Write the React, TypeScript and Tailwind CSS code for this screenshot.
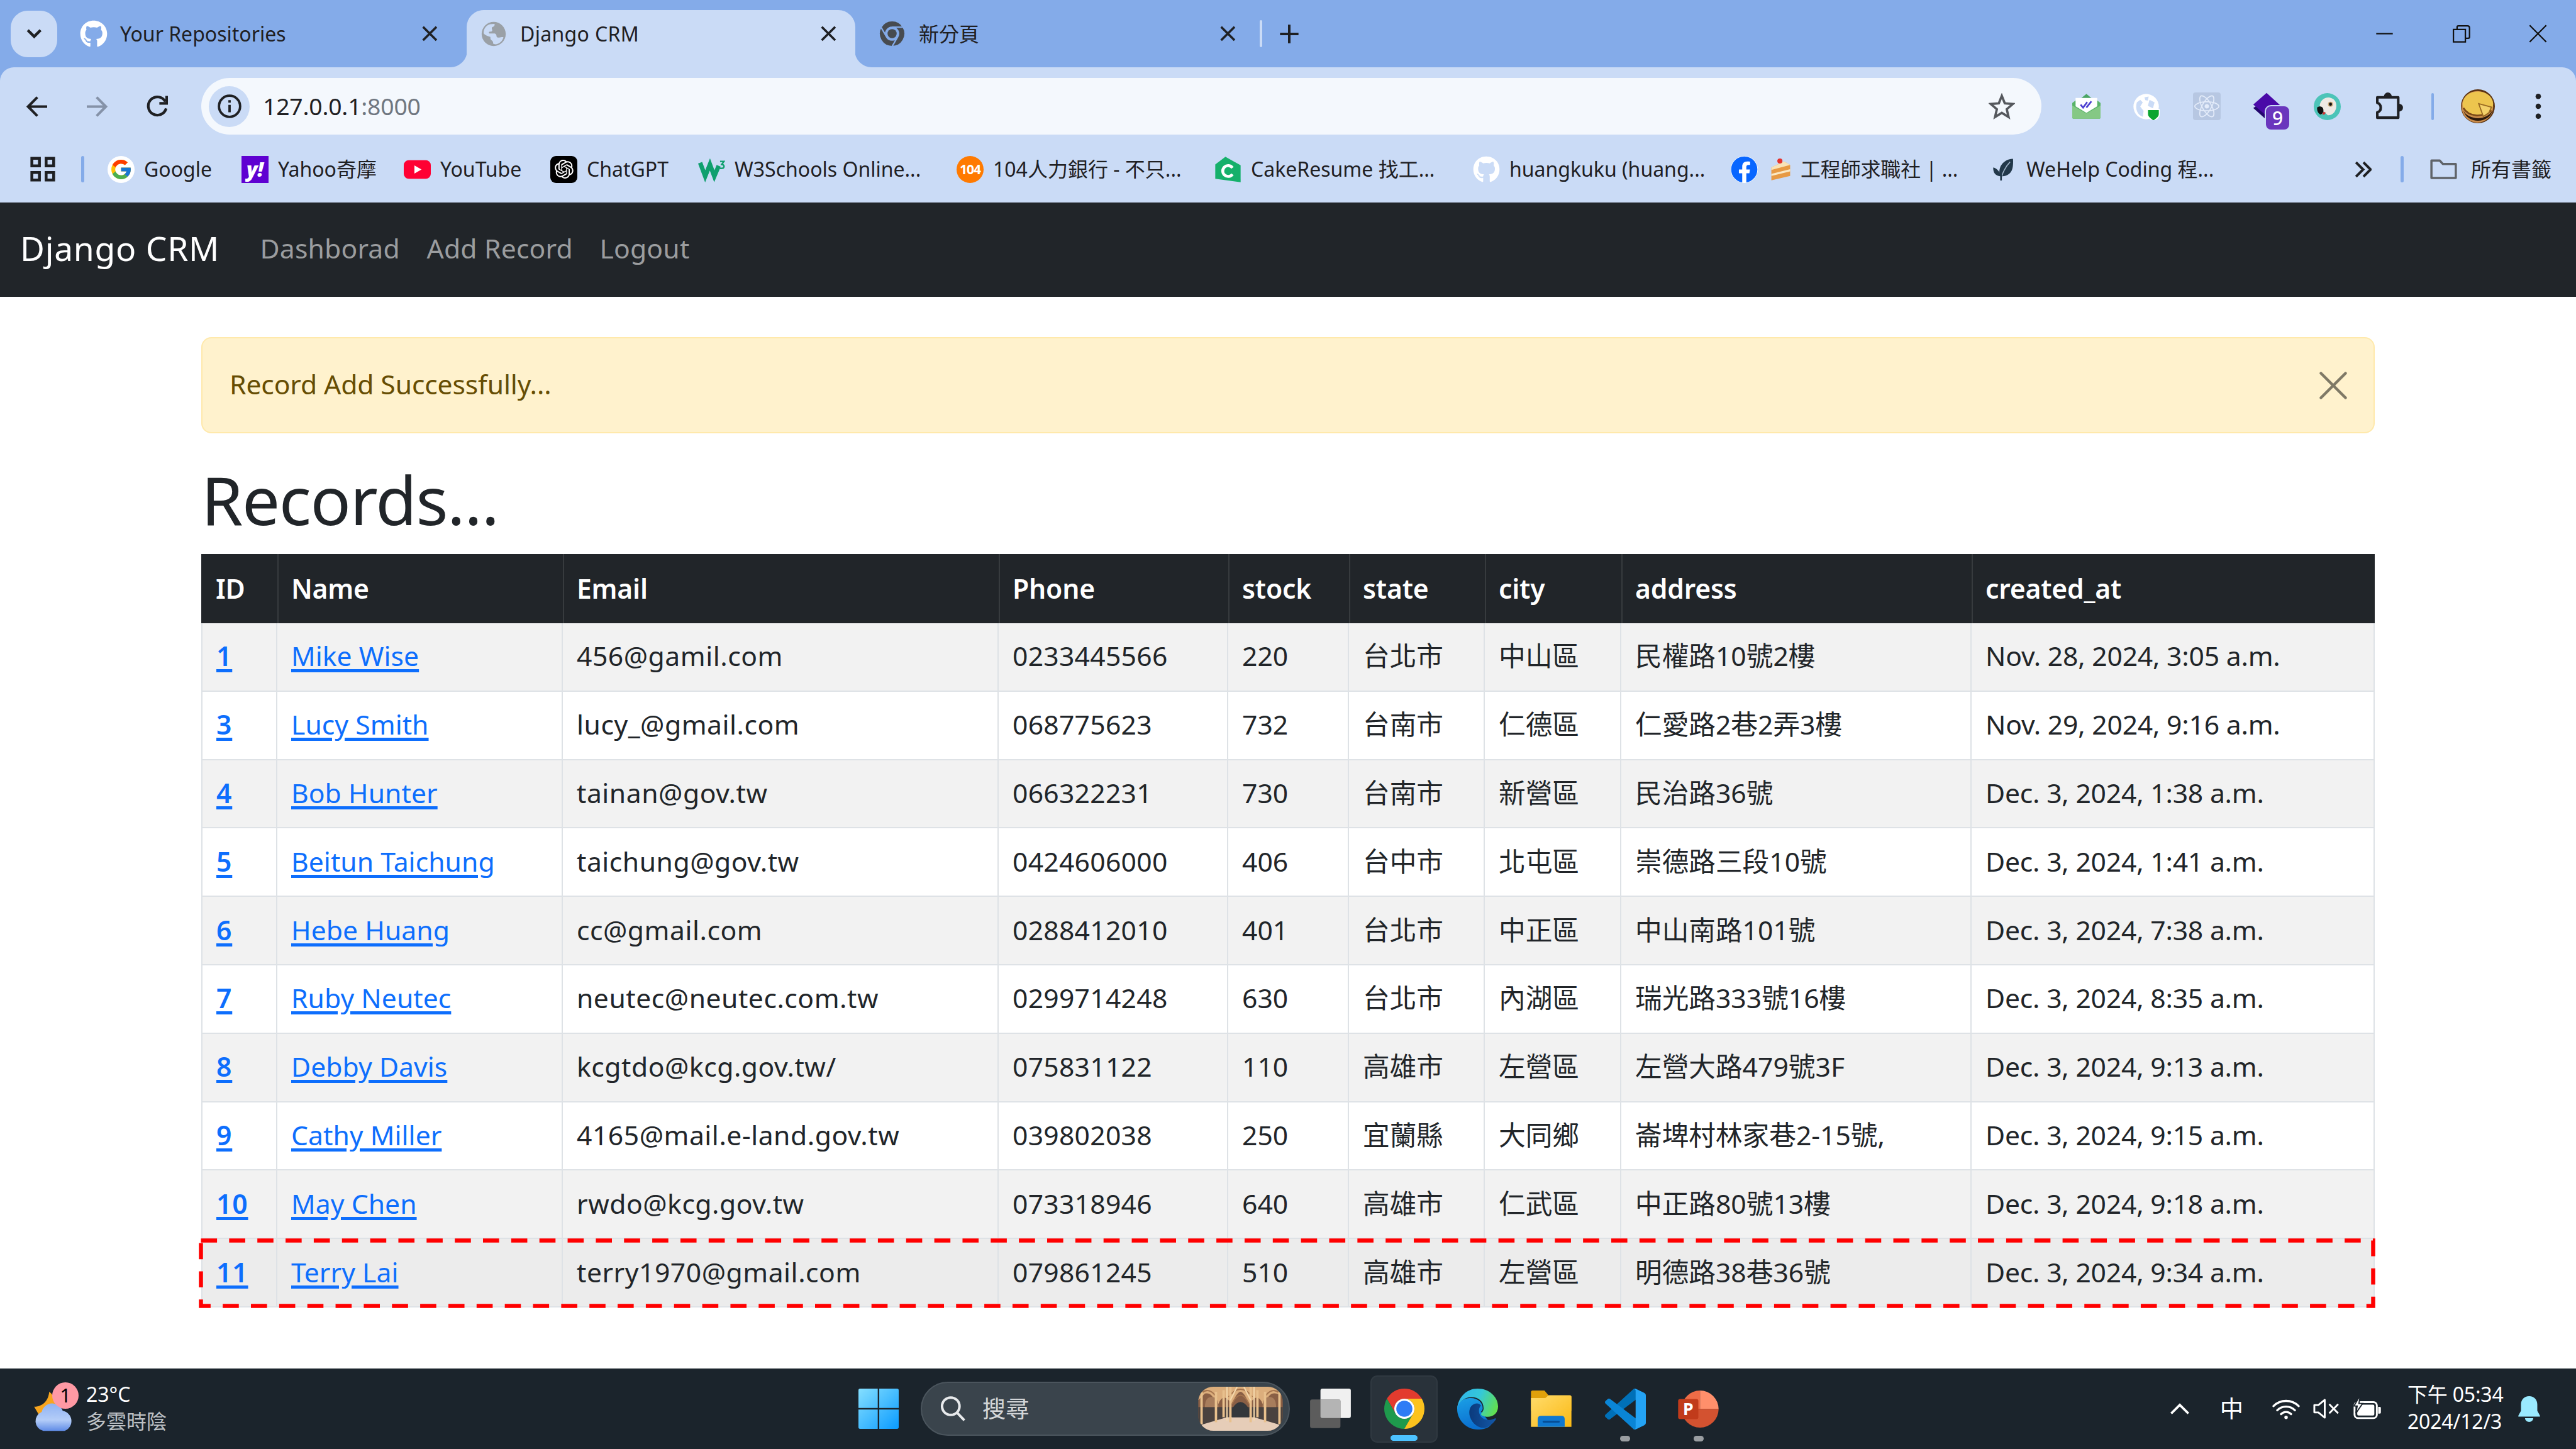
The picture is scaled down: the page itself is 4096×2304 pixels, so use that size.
import React from 'react';
import { FaFacebook, FaGithub, FaReact } from 'react-icons/fa';
import { FcGoogle } from 'react-icons/fc';
import { RiOpenaiFill } from 'react-icons/ri';

type IconProps = { className?: string };

/* ---------- small drawings ---------- */

function CloseX({ className = '' }: IconProps) {
  return (
    <svg viewBox="0 0 10 10" className={'size-2.5 shrink-0 ' + className} fill="none" stroke="#1f2023" strokeWidth="1.35">
      <path d="M1 1l8 8M9 1l-8 8" />
    </svg>
  );
}

function Globe({ className = '' }: IconProps) {
  return (
    <svg viewBox="0 0 16 16" className={className}>
      <circle cx="8" cy="8" r="7.3" fill="#9aa0a6" />
      <path d="M1.9 7.6C1.8 5 3.4 2.8 5.8 2.1l2.7-.2c.3.9-.2 1.5-1 1.8-.7.2-.8.9-.5 1.5.4.8-.2 1.4-1 1.4-.9 0-1.2.6-.6 1.1h2.7c1.2 0 1.6.7 1.6 1.5s.8 1.1 1.6 1c1-.1 2-.5 2.6-.2-.5 2.3-2.6 4.2-5 4.3l-1.2-.4c0-1-.2-1.6-.9-2-.9-.5-.8-1.4-.8-2.1C4.600 9.200 3 9 1.900 7.600z" fill="#cadbf6" />
    </svg>
  );
}

function ChromeMark({ className = '', mono = false }: IconProps & { mono?: boolean }) {
  const c = mono ? ['#474b50', '#474b50', '#474b50', '#474b50', '#84abe9'] : ['#e33b2e', '#1e9a4c', '#fcc31e', '#2f7cf6', '#ffffff'];
  const stroke = mono ? '#84abe9' : 'none';
  return (
    <svg viewBox="0 0 48 48" className={className}>
      <g stroke={stroke} strokeWidth="2.5">
        <path fill={c[0]} d="M3.22 12L13.61 30A12 12 0 0 1 24 12H44.78A24 24 0 0 0 3.220 12Z" />
        <path fill={c[1]} d="M13.61 30L3.22 12A24 24 0 0 0 24 48L34.39 30A12 12 0 0 1 13.610 30Z" />
        <path fill={c[2]} d="M24 12H44.78A24 24 0 0 1 24 48L34.390 30A12 12 0 0 0 24 12Z" />
      </g>
      <circle cx="24" cy="24" r="12" fill={c[4]} />
      <circle cx="24" cy="24" r={mono ? 8.5 : 9.6} fill={c[3]} />
    </svg>
  );
}

/* ---------- browser chrome ---------- */

function TabStrip() {
  return (
    <div className="flex h-[107px] items-center bg-[#84abe9] pl-[17px] text-[32px] text-[#1f2023]">
      <div className="flex size-[74px] shrink-0 items-center justify-center rounded-[27px] bg-[#cadbf6]">
        <svg viewBox="0 0 10 10" className="size-2.5" fill="none" stroke="#1f2023" strokeWidth="1.7">
          <path d="M1.200 3l3.800 3.800L8.800 3" />
        </svg>
      </div>
      <div className="flex w-[651px] items-center pr-[45px] pl-[36px]">
        <FaGithub className="size-[44px] shrink-0 text-white" />
        <span className="ml-[20px]">Your Repositories</span>
        <CloseX className="ml-auto" />
      </div>
      <div className="relative flex h-[91px] w-[618px] items-center self-end rounded-t-[27px] bg-[#cadbf6] pl-[22px] pr-[29px] pb-[16px]">
        <svg viewBox="0 0 10 10" className="absolute -left-[26px] bottom-0 size-[27px]" fill="#cadbf6"><path d="M10 0v10H0A10 10 0 0 0 10 0z" /></svg>
        <svg viewBox="0 0 10 10" className="absolute -right-[26px] bottom-0 size-[27px]" fill="#cadbf6"><path d="M0 0v10h10A10 10 0 0 1 0 0z" /></svg>
        <Globe className="size-[42px] shrink-0" />
        <span className="ml-[21px] tracking-[0.01em]">Django CRM</span>
        <CloseX className="ml-auto" />
      </div>
      <div className="flex w-[643px] items-center pl-[38px] pr-[37px]">
        <ChromeMark mono className="size-[41px] shrink-0" />
        <span className="ml-[22px]">新分頁</span>
        <CloseX className="ml-auto" />
      </div>
      <div className="h-[43px] w-[4px] shrink-0 rounded bg-[#cadbf6]" />
      <svg viewBox="0 0 12 12" className="ml-[27px] size-[32px]" fill="none" stroke="#1f2023" strokeWidth="1.5">
        <path d="M6 .5v11M.5 6h11" />
      </svg>
      <div className="ml-auto flex">
        {['M.5 5.500h10', 'M.8 3h7.200v7.500H.8zM3 3V1.600Q3 .8 3.800 .8H9.200Q10.500 .8 10.500 2V7.500Q10.500 8.300 9.700 8.300H8', 'M.5 .5l10 10M10.500 .5l-10 10'].map((d) => (
          <div key={d} className="flex w-[122px] justify-center">
            <svg viewBox="0 0 11 11" className="size-[29px]" fill="none" stroke="#111" strokeWidth=".85"><path d={d} /></svg>
          </div>
        ))}
      </div>
    </div>
  );
}

function Extensions() {
  return (
    <div className="flex items-center">
      <svg viewBox="0 0 17 15" className="ml-[49px] h-[40px] w-[45px]">
        <path d="M5 3L8.500 0 12 3z" fill="#4aa564" />
        <path d="M0 5.500L2 4h13l2 1.500V14a1 1 0 0 1-1 1H1a1 1 0 0 1-1-1z" fill="#58b368" />
        <path d="M0 7l8.500 4.800L17 7v7a1 1 0 0 1-1 1H1a1 1 0 0 1-1-1z" fill="#85c885" />
        <path d="M2 2.500h13v5L8.500 11.500 2 7.500z" fill="#fff" />
        <path d="M5 6.500l1.500 1.800L9 5M8.500 8.300L11.500 4.500" stroke="#4b3fd0" strokeWidth="1" fill="none" />
      </svg>
      <svg viewBox="0 0 16 16" className="ml-[51px] size-[43px]">
        <circle cx="8" cy="8" r="7.500" fill="#ffffff" />
        <path d="M2.500 5.500l2-1.500 1.500 1.500L4.500 8l2 2.500L6 14C3 13 1.300 9.500 2.500 5.500zM7 2.500l2.500-.5L9 4.500 7.500 4.200zM10 4l3 1.500L12 9 9 7.500z" fill="#cadbf6" />
        <path d="M8.800 9.700h7v2.800c0 2-2 3-3.500 4C10.800 15.500 8.800 14.500 8.800 12.500z" fill="#0ba530" stroke="#fff" strokeWidth=".6" />
      </svg>
      <div className="ml-[53px] flex size-[44px] items-center justify-center rounded-[4px] bg-[#b7c7e2]">
        <FaReact className="size-[40px] text-[#e4ecfa]" />
      </div>
      <div className="relative ml-[51px] size-[44px]">
        <svg viewBox="0 0 16 16" className="size-[44px]">
          <path d="M.3 9l3-2 8 7-3.500 1.700z" fill="#23066e" />
          <path d="M8 .3l8 7.200-8 6L.3 7z" fill="#4a0aa8" />
        </svg>
        <span className="absolute left-[19px] top-[20px] flex h-[41px] w-[41px] items-center justify-center rounded-[10px] border-2 border-[#cadbf6] bg-[#6a36bd] text-[30px] leading-none font-medium text-white">9</span>
      </div>
      <svg viewBox="0 0 16 16" className="ml-[53px] size-[43px]">
        <circle cx="8" cy="8" r="8" fill="#4cc4b8" />
        <path d="M3.500 8C3.500 4.500 6.500 2.200 9.500 2.700c3.300.6 4.300 3.600 3.700 6.300-.6 2.600-2.600 4.300-4.900 4.100L5 10z" fill="#eee9e4" />
        <path d="M2 8.500C3.500 7.300 5.500 8 5.700 9.700c.2 1.500-.5 2.600-1.700 3C2.500 12 1.800 10.300 2 8.500z" fill="#111" />
        <path d="M5.700 11l1.500.6-1 1.200-1.200-.2z" fill="#c33" />
        <circle cx="9.900" cy="6.600" r="1.500" fill="#c8a878" /><circle cx="9.900" cy="6.600" r=".9" fill="#111" />
      </svg>
      <svg viewBox="0 0 17 17" className="ml-[54px] size-[46px]" fill="none" stroke="#1f2023" strokeWidth="1.500" strokeLinejoin="round">
        <path d="M1.500 3.200h12.300v12H1.500v-3.200c2.700-.7 2.700-4.700 0-5.500z" />
        <path d="M5.700 2.700a2 2 0 0 1 4 0zM14.300 7.300a2 2 0 0 1 0 4z" fill="#1f2023" strokeWidth=".6" />
      </svg>
      <div className="ml-[44px] h-[43px] w-[4px] rounded bg-[#84abe9]" />
      <svg viewBox="0 0 20 20" className="ml-[43px] size-[54px]">
        <circle cx="10" cy="10" r="10" fill="#5b3413" />
        <circle cx="9.700" cy="10.300" r="9.300" fill="#c98b4a" />
        <path d="M1.500 12.500C4 18 15 19 18.500 12.500 17 20 4 21 1.500 12.500z" fill="#2b1a0c" />
        <ellipse cx="10" cy="8.600" rx="9" ry="7.300" fill="#edc54e" />
        <path d="M1.500 11c3 5 10.500 6 16.500 1.500" stroke="#7a4818" strokeWidth="1" fill="none" />
        <path d="M10.500 8.500l7.500 2-1.500 3.300-3.300 2.200z" fill="#f3d169" stroke="#9a6a22" strokeWidth=".7" />
      </svg>
      <svg viewBox="0 0 4 14" className="ml-[63px] h-[40px] w-[12px]" fill="#1f2023">
        <circle cx="2" cy="1.500" r="1.500" /><circle cx="2" cy="7" r="1.500" /><circle cx="2" cy="12.500" r="1.500" />
      </svg>
    </div>
  );
}

function Toolbar() {
  return (
    <div className="flex h-[124px] items-center rounded-t-[22px] bg-[#cadbf6] pl-[42px] pr-[52px]">
      <svg viewBox="0 0 12 12" className="size-[33px]" fill="none" stroke="#1f2023" strokeWidth="1.500"><path d="M12 6H1M6.300 .6L1 6l5.300 5.400" /></svg>
      <svg viewBox="0 0 12 12" className="ml-[63px] size-[33px]" fill="none" stroke="#8592a8" strokeWidth="1.500"><path d="M0 6h11M5.700 .6L11 6l-5.300 5.400" /></svg>
      <svg viewBox="0 0 12 12" className="ml-[62px] size-[34px]" fill="none" stroke="#1f2023" strokeWidth="1.500">
        <path d="M10.500 3.300A5.100 5.100 0 1 0 11 7.200" /><path d="M11.300 .2v4.200H7.200" />
      </svg>
      <div className="ml-[53px] flex h-[90px] w-[2926px] items-center rounded-full bg-[#f4f8fd] pl-[12px] pr-[42px]">
        <div className="flex size-[65px] items-center justify-center rounded-full bg-[#cadbf6]">
          <svg viewBox="0 0 14 14" className="size-[38px]" fill="none" stroke="#1f2023" strokeWidth="1.400"><circle cx="7" cy="7" r="6.200" /><path d="M7 6.200v4.300M7 3.400v1.500" /></svg>
        </div>
        <span className="ml-[21px] text-[37.300px] tracking-[-0.005em] text-[#1f2023]">127.0.0.1<span className="text-[#6f7680]">:8000</span></span>
        <svg viewBox="0 0 16 16" className="ml-auto size-[42px]" fill="none" stroke="#55585d" strokeWidth="1.400"><path d="M8 1.700l1.800 4.500 4.900.4-3.700 3.200 1.100 4.700L8 12l-4.100 2.500L5 9.800 1.300 6.600l4.900-.4z" /></svg>
      </div>
      <Extensions />
    </div>
  );
}

const bookmarks: { label: string; width: string; icon: React.ReactNode; emblem?: boolean }[] = [
  { label: 'Google', width: 'w-[213px]', icon: <span className="flex size-[43px] items-center justify-center rounded-full bg-white"><FcGoogle className="size-[37px]" /></span> },
  { label: 'Yahoo奇摩', width: 'w-[258px]', icon: <span className="flex size-[43px] items-center justify-center bg-[#5f01d1] text-[32px] leading-none font-black text-white italic">y!</span> },
  {
    label: 'YouTube', width: 'w-[233px]',
    icon: <svg viewBox="0 0 16 16" className="size-[43px]"><rect y="2.500" width="16" height="11" rx="3" fill="#ff0033" /><path d="M6.300 5.600v4.800L10.500 8z" fill="#fff" /></svg>,
  },
  { label: 'ChatGPT', width: 'w-[235px]', icon: <span className="flex size-[43px] items-center justify-center rounded-[9px] bg-black"><RiOpenaiFill className="size-[36px] text-white" /></span> },
  {
    label: 'W3Schools Online...', width: 'w-[411px]',
    icon: (
      <svg viewBox="0 0 16 16" className="size-[43px]" fill="none" stroke="#0f9f6e">
        <path d="M1.200 4l3 8L7 5l2.600 7L12.200 5.800" strokeWidth="2.600" />
        <path d="M13 3.200h2.300L14 5q1.500.2 1.300 1.400T12.900 7.300" strokeWidth=".9" />
      </svg>
    ),
  },
  { label: '104人力銀行 - 不只...', width: 'w-[410px]', icon: <span className="flex size-[43px] items-center justify-center rounded-full bg-[#ff7a00] text-[21px] leading-none font-bold tracking-tighter text-white">104</span> },
  {
    label: 'CakeResume 找工...', width: 'w-[411px]',
    icon: (
      <svg viewBox="0 0 16 16" className="size-[43px]">
        <path d="M.5 5L6.500 .5 15.500 5.500V15.500L.5 13.500z" fill="#15b06b" />
        <path d="M10.700 7A3.200 3.200 0 1 0 10.700 10.800" fill="none" stroke="#fff" strokeWidth="1.700" />
      </svg>
    ),
  },
  { label: 'huangkuku (huang...', width: 'w-[410px]', icon: <FaGithub className="size-[43px] text-white" /> },
  { label: '工程師求職社 | ...', width: 'w-[412px]', emblem: true, icon: <FaFacebook className="size-[43px] rounded-full bg-white text-[#0866ff]" /> },
  {
    label: 'WeHelp Coding 程...', width: 'w-[420px]',
    icon: (
      <svg viewBox="0 0 16 16" className="size-[43px]">
        <path d="M6 12C4.500 7 7.500 2 13.700 1.700 14 6.500 13.500 11.500 7.500 12z" fill="#22384a" />
        <path d="M6.500 12C3.500 12 1.800 10 2 6.800 4.500 7.500 6 9.500 6.500 12z" fill="#22384a" />
        <path d="M6.500 14.500C7 10.500 9.500 6 12 3.500" stroke="#9fb3c8" strokeWidth=".6" fill="none" />
        <path d="M6.600 14.500V11" stroke="#22384a" strokeWidth="1" />
      </svg>
    ),
  },
];

function CakeSlice() {
  return (
    <svg viewBox="0 0 12 14" className="mr-[15px] ml-[20px] h-[38px] w-[33px] shrink-0">
      <path d="M.5 6L8 2.500l3.500 2V11L.5 13.500z" fill="#e79a45" />
      <path d="M.5 6L8 2.500l3.500 2L.5 7.500z" fill="#f8e3b8" />
      <path d="M.5 9.800L11.500 7v1.300L.5 11z" fill="#fbe9c4" />
      <circle cx="5.500" cy="2.200" r="1.500" fill="#e5322d" />
    </svg>
  );
}

function BookmarksBar() {
  return (
    <div className="flex h-[91px] items-center bg-[#cadbf6] pb-[15px] pl-[48px] pr-[39px] text-[32px] text-[#1f2023]">
      <svg viewBox="0 0 15 15" className="size-[40px]" fill="none" stroke="#1f2023" strokeWidth="1.700">
        <path d="M1 1h4.500v4.500H1zM9.500 1H14v4.500H9.500zM1 9.500h4.500V14H1zM9.500 9.500H14V14H9.500z" />
      </svg>
      <div className="mr-[37px] ml-[41px] h-[42px] w-[5px] rounded bg-[#84abe9]" />
      {bookmarks.map((b) => (
        <div key={b.label} className={'flex shrink-0 items-center whitespace-nowrap ' + b.width}>
          {b.icon}
          {b.emblem ? <CakeSlice /> : null}
          <span className={b.emblem ? 'tracking-[-0.005em]' : 'ml-[15px]'}>{b.label}</span>
        </div>
      ))}
      <svg viewBox="0 0 10 10" className="mr-[46px] ml-auto size-[27px]" fill="none" stroke="#1f2023" strokeWidth="1.500"><path d="M.8 .8L5 5 .8 9.200M5.200 .8L9.400 5 5.200 9.200" /></svg>
      <div className="h-[42px] w-[5px] rounded bg-[#84abe9]" />
      <svg viewBox="0 0 16 16" className="mr-[22px] ml-[42px] size-[43px]" fill="none" stroke="#5f6368" strokeWidth="1.300" strokeLinejoin="round"><path d="M.8 2.700h4.900l1.800 2h7.700V13H.8z" /></svg>
      <span>所有書籤</span>
    </div>
  );
}

/* ---------- page ---------- */

const columns = ['ID', 'Name', 'Email', 'Phone', 'stock', 'state', 'city', 'address', 'created_at'];
const colWidths = ['w-[121px]', 'w-[454px]', 'w-[693px]', 'w-[365px]', 'w-[192px]', 'w-[216px]', 'w-[217px]', 'w-[557px]', 'w-[641px]'];
const cellStyles = [
  '-ml-[2px] pl-[24px] tracking-[0.02em]',
  'pl-[22px] tracking-[0.001em]',
  'pl-[22px] tracking-[0.012em]',
  'pl-[22px] tracking-[0.006em]',
  'pl-[22px]',
  'pl-[22px]',
  'pl-[22px]',
  'pl-[22px]',
  'pl-[22px] tracking-[-0.005em]',
];
const rows = [
  ['1', 'Mike Wise', '456@gamil.com', '0233445566', '220', '台北市', '中山區', '民權路10號2樓', 'Nov. 28, 2024, 3:05 a.m.'],
  ['3', 'Lucy Smith', 'lucy_@gmail.com', '068775623', '732', '台南市', '仁德區', '仁愛路2巷2弄3樓', 'Nov. 29, 2024, 9:16 a.m.'],
  ['4', 'Bob Hunter', 'tainan@gov.tw', '066322231', '730', '台南市', '新營區', '民治路36號', 'Dec. 3, 2024, 1:38 a.m.'],
  ['5', 'Beitun Taichung', 'taichung@gov.tw', '0424606000', '406', '台中市', '北屯區', '崇德路三段10號', 'Dec. 3, 2024, 1:41 a.m.'],
  ['6', 'Hebe Huang', 'cc@gmail.com', '0288412010', '401', '台北市', '中正區', '中山南路101號', 'Dec. 3, 2024, 7:38 a.m.'],
  ['7', 'Ruby Neutec', 'neutec@neutec.com.tw', '0299714248', '630', '台北市', '內湖區', '瑞光路333號16樓', 'Dec. 3, 2024, 8:35 a.m.'],
  ['8', 'Debby Davis', 'kcgtdo@kcg.gov.tw/', '075831122', '110', '高雄市', '左營區', '左營大路479號3F', 'Dec. 3, 2024, 9:13 a.m.'],
  ['9', 'Cathy Miller', '4165@mail.e-land.gov.tw', '039802038', '250', '宜蘭縣', '大同鄉', '崙埤村林家巷2-15號,', 'Dec. 3, 2024, 9:15 a.m.'],
  ['10', 'May Chen', 'rwdo@kcg.gov.tw', '073318946', '640', '高雄市', '仁武區', '中正路80號13樓', 'Dec. 3, 2024, 9:18 a.m.'],
  ['11', 'Terry Lai', 'terry1970@gmail.com', '079861245', '510', '高雄市', '左營區', '明德路38巷36號', 'Dec. 3, 2024, 9:34 a.m.'],
];

function RecordsTable() {
  return (
    <div className="relative w-[3456px]">
      <div className="flex h-[110px] bg-[#212529] font-semibold tracking-[-0.005em] text-white">
        {columns.map((c, i) => (
          <div key={c} className={'flex shrink-0 items-center ' + colWidths[i] + (i > 0 ? ' border-l-2 border-[#373b3e] pl-[20px]' : ' pl-[23px]')}>{c}</div>
        ))}
      </div>
      {rows.map((r, ri) => (
        <div
          key={r[0]}
          className={'flex h-[108.800px] border-b-2 border-l-2 border-[#dee2e6] ' + (ri === 9 ? 'bg-[#ececec]' : ri % 2 === 0 || ri === 8 ? 'bg-[#f2f2f2]' : 'bg-white')}
        >
          {r.map((cell, i) => (
            <div
              key={i}
              className={'flex shrink-0 items-center border-r-2 border-[#dee2e6] pb-[2px] whitespace-nowrap text-[#212529] ' + colWidths[i] + ' ' + cellStyles[i]}
            >
              {i < 2 ? (
                <a className={'text-[#0d6efd] underline decoration-[5px] underline-offset-[5px] ' + (i === 0 ? 'font-semibold' : '')}>{cell}</a>
              ) : (
                cell
              )}
            </div>
          ))}
        </div>
      ))}
      <svg viewBox="0 0 3462 112" className="absolute -bottom-[2px] -left-[4px] h-[112px] w-[3462px]" fill="none">
        <rect x="3.500" y="3.500" width="3454" height="104" stroke="#ff0000" strokeWidth="6.500" strokeDasharray="25.600 19.250" />
      </svg>
    </div>
  );
}

function Page() {
  return (
    <div className="flex-1 bg-white text-[42.670px] text-[#212529]">
      <nav className="flex h-[150px] items-center bg-[#212529] pb-[4px] pl-[32px]">
        <span className="mr-[43px] text-[53.330px] tracking-[0.014em] text-white">Django CRM</span>
        {['Dashborad', 'Add Record', 'Logout'].map((t) => (
          <span key={t} className="px-[21.300px] tracking-[0.004em] text-[#9b9d9f]">{t}</span>
        ))}
      </nav>
      <main className="mx-auto w-[3456px] pt-[64px]">
        <div className="flex h-[153px] items-center justify-between rounded-[16px] border-2 border-[#ffe9ab] bg-[#fff2cd] pl-[43px] pr-[42px] text-[#664d03]">
          <span className="pb-[4px] tracking-[-0.003em]">Record Add Successfully...</span>
          <svg viewBox="0 0 16 16" className="size-[44px]" fill="none" stroke="#7f7966" strokeWidth="1.600" strokeLinecap="round"><path d="M.9 .9l14.200 14.200M15.100 .9L.9 15.100" /></svg>
        </div>
        <h1 className="mt-[41px] mb-[23px] h-[128px] text-[106.670px] leading-[128px] tracking-[-0.013em]">Records...</h1>
        <RecordsTable />
      </main>
    </div>
  );
}

/* ---------- taskbar ---------- */

function Weather() {
  return (
    <div className="flex items-center">
      <div className="relative h-[76px] w-[64px]">
        <svg viewBox="0 0 24 28.500" className="h-[76px] w-[64px]">
          <defs>
            <linearGradient id="cloud" x1="0" y1="0" x2="0" y2="1"><stop offset="0" stopColor="#8fb2f3" /><stop offset=".6" stopColor="#b4cdf8" /><stop offset="1" stopColor="#5f8be6" /></linearGradient>
          </defs>
          <path d="M9.500 4C13 7 13 10 17 12L12 20 4 19 .5 13C6 13 9 9 9.500 4z" fill="#f8a51e" />
          <path d="M6 27.500a6 6 0 0 1-1-11.400 6.500 6.500 0 0 1 12.500-.6A6.200 6.200 0 0 1 18.500 27.500z" fill="url(#cloud)" />
        </svg>
        <span className="absolute -top-[4px] left-[30px] flex size-[42px] items-center justify-center rounded-full bg-[#ff99a4] text-[30px] leading-none text-black">1</span>
      </div>
      <div className="ml-[20px] pb-[4px] text-[32px] leading-[43px]">
        <div className="text-white">23°C</div>
        <div className="text-[#bcc0c4]">多雲時陰</div>
      </div>
    </div>
  );
}

function SearchArt() {
  return (
    <svg viewBox="0 0 50 26" className="h-[70px] w-[135px]">
      <defs><clipPath id="art"><rect width="50" height="26" rx="9" /></clipPath></defs>
      <g clipPath="url(#art)">
        <rect width="50" height="26" fill="#8a5f45" />
        <rect y="12" width="50" height="14" fill="#4a423f" />
        <path d="M0 26V23L17 18H33L50 23V26z" fill="#e6cdb8" />
        <path d="M0 0H50V5L46 4Q42 3 40 9L38 10Q36 5 33 7L30 10Q27 3 25 3T20 10L17 7Q14 5 12 10L10 9Q8 3 4 4L0 8z" fill="#dcae7c" />
        <path d="M4 12Q4 6 8 6T12 12zM38 12Q38 6 42 6T46 12z" fill="#a87d5c" />
        <path d="M0 6Q5 -1 10 5M40 5Q45 -1 50 6M18 6Q25 -3 32 6M20 10Q25 0 30 10" stroke="#a6754e" strokeWidth=".8" fill="none" />
        <path d="M20 18V13Q25 5 30 13V18z" fill="#33373b" />
        <path d="M2 3V22M10.500 3V21M15 2V18M19 0V21M31 0V21M35 2V18M39.500 3V21M48 3V22" stroke="#e8c08d" strokeWidth="1.400" />
        <path d="M17 0V20M33 0V20M23 0L19 8M27 0L31 8" stroke="#f3d7ab" strokeWidth=".8" />
      </g>
    </svg>
  );
}

function TaskIcons() {
  return (
    <div className="flex items-center">
      <svg viewBox="0 0 24 24" className="size-[64px]">
        <defs><linearGradient id="win" x1="0" y1="0" x2="1" y2="1"><stop offset="0" stopColor="#85dfff" /><stop offset="1" stopColor="#0a9bff" /></linearGradient></defs>
        <path fill="url(#win)" d="M1 0H11.500V11.500H0V1Q0 0 1 0zM12.400 0H23Q24 0 24 1V11.500H12.400zM0 12.500H11.500V24H1Q0 24 0 23zM12.400 12.500H24V23Q24 24 23 24H12.400z" />
      </svg>
      <div className="ml-[35px] flex h-[86px] w-[587px] items-center rounded-full border-2 border-[#4b555d] bg-[#3a444c] pl-[29px] pr-[9px] text-[37.300px] text-[#d2d5d8]">
        <svg viewBox="0 0 15 15" className="mr-[27px] size-[40px]" fill="none" stroke="#e8eaec" strokeWidth="1.500"><circle cx="6.300" cy="6" r="5.200" /><path d="M10 9.800l4.400 4.600" /></svg>
        搜尋
        <span className="ml-auto"><SearchArt /></span>
      </div>
      <svg viewBox="0 0 24.300 24" className="ml-[32px] h-[64px] w-[65px]">
        <rect x="6.200" y="0" width="18.100" height="17.500" rx="1.200" fill="#f0f0f0" />
        <rect x="0" y="6.500" width="18.100" height="17" rx="1.200" fill="#5c5c5c" />
        <path d="M6.200 6.500H17.500Q18.100 6.500 18.100 7.200V17.500H7.200Q6.200 17.500 6.200 16.500z" fill="#b4b4b4" />
      </svg>
      <div className="relative ml-[31px] flex size-[107px] items-center justify-center rounded-[11px] border-2 border-[#303941] bg-[#29323a]">
        <ChromeMark className="size-[64px]" />
        <span className="absolute bottom-[1px] h-[9px] w-[43px] rounded-full bg-[#4cc2ff]" />
      </div>
      <svg viewBox="0 0 48 48" className="ml-[31px] size-[65px]">
        <defs>
          <linearGradient id="e1" x1="0" y1=".3" x2="1" y2=".6"><stop offset="0" stopColor="#2fb5ea" /><stop offset=".5" stopColor="#35c8d8" /><stop offset="1" stopColor="#62e04e" /></linearGradient>
          <linearGradient id="e2" x1="0" y1="0" x2=".3" y2="1"><stop offset="0" stopColor="#1ba0e6" /><stop offset="1" stopColor="#0a6fd0" /></linearGradient>
          <linearGradient id="e3" x1="0" y1="0" x2="1" y2="0"><stop offset="0" stopColor="#0b3a7c" /><stop offset="1" stopColor="#1358a8" /></linearGradient>
        </defs>
        <path d="M0 24C0 15 8 11 16 11c8 0 14 5 14 12 0 2-1 3-2 4L40 42C36 47 30 48 24 48 11 48 0 37 0 24z" fill="url(#e2)" />
        <path d="M20 18c-5 2-7 8-5 15 3 9 11 14 18 13 6-2 10-6 12.500-10 .5-1-.5-1.500-1.500-1-8 4-16 1-18-6-1-4 0-7 2-9-2-3-5-3-8-2z" fill="url(#e3)" />
        <path d="M0 24C1 10 11 0 24 0c14 0 24 10 24 21 0 8-6 12-12 12-4 0-8-1.500-8-3 0-1.500 3-3 3-7C31 15 25 10 17 10 8 10 1 16 0 24z" fill="url(#e1)" />
      </svg>
      <svg viewBox="0 0 24 22" className="ml-[52px] h-[59px] w-[65px]">
        <defs><linearGradient id="fold" x1="0" y1="0" x2="1" y2="1"><stop offset="0" stopColor="#ffdc6c" /><stop offset="1" stopColor="#fbb914" /></linearGradient></defs>
        <path d="M0 1Q0 0 1 0H8L10.500 3H23Q24 3 24 4V12H0z" fill="#e0a10a" />
        <path d="M0 4.500H8.500L10.500 2.800H23Q24 2.800 24 3.800V21.500H0z" fill="url(#fold)" />
        <path d="M4 21.500V17Q4 15 6 15H18Q20 15 20 17V21.500z" fill="#0f78d0" /><path d="M7.500 18.500H16.500" stroke="#064f98" strokeWidth="1.200" strokeLinecap="round" />
      </svg>
      <div className="relative ml-[53px] flex h-[107px] w-[65px] items-center justify-center">
        <svg viewBox="0 0 100 100" className="size-[65px]">
          <path fill="#0070b8" d="M96.460 10.800L75.860.88C73.500-.3 70.600.2 68.750 2.080L1.300 63.580c-1.800 1.650-1.800 4.500 0 6.150l5.500 5c1.500 1.360 3.700 1.460 5.360.24L93.360 13.400z" />
          <path fill="#0a85d6" d="M96.460 89.200L75.860 99.120C73.500 100.300 70.600 99.800 68.750 97.920L1.300 36.420c-1.800-1.650-1.800-4.500 0-6.150l5.500-5c1.500-1.360 3.700-1.460 5.360-.24L93.360 86.600z" />
          <path fill="#24a3f4" d="M75.860 99.120C73.500 100.300 70.600 99.800 68.750 97.900 71 100.200 75 98.600 75 95.300V4.660C75 1.400 71-.2 68.750 2.100 70.600.2 73.500-.3 75.860.87L96.460 10.780C98.600 11.800 100 14 100 16.400V83.600C100 86 98.600 88.200 96.460 89.200z" />
        </svg>
        <span className="absolute bottom-[2px] left-[24px] h-[9px] w-[16px] rounded-full bg-[#9a9ea2]" />
      </div>
      <div className="relative ml-[51px] flex h-[107px] w-[65px] items-center justify-center">
        <svg viewBox="0 0 24 22" className="h-[59px] w-[65px]">
          <path d="M13 0A11 11 0 0 0 2 11h11z" fill="#ed6c47" />
          <path d="M13 0A11 11 0 0 1 24 11H13z" fill="#ff8f6b" />
          <path d="M2 11a11 11 0 0 0 22 0z" fill="#d35230" />
          <rect x="0" y="5" width="12" height="12" rx="1.200" fill="#c13b1b" />
          <text x="6" y="14.500" fontSize="10" fontWeight="700" textAnchor="middle" fill="#fff">P</text>
        </svg>
        <span className="absolute bottom-[2px] left-[25px] h-[9px] w-[16px] rounded-full bg-[#9a9ea2]" />
      </div>
    </div>
  );
}

function Tray() {
  return (
    <div className="flex items-center text-white">
      <svg viewBox="0 0 11 6.500" className="h-[18px] w-[30px]" fill="none" stroke="#fff" strokeWidth="1.400"><path d="M.5 6L5.500 1l5 5" /></svg>
      <span className="ml-[49px] text-[37.300px] leading-none">中</span>
      <svg viewBox="0 0 16 12" className="ml-[46px] h-[33px] w-[44px]" fill="none" stroke="#fff" strokeWidth="1.200" strokeLinecap="round">
        <path d="M.7 4.300A10.300 10.300 0 0 1 15.300 4.300M2.900 6.700a7.200 7.200 0 0 1 10.200 0M5.100 8.900a4.100 4.100 0 0 1 5.800 0" /><circle cx="8" cy="10.800" r="1" fill="#fff" stroke="none" />
      </svg>
      <svg viewBox="0 0 15.500 12" className="ml-[21px] h-[32px] w-[42px]" fill="none" stroke="#fff" strokeWidth="1.100" strokeLinejoin="round">
        <path d="M.6 3.800H3L6.800 .7V11.300L3 8.200H.6zM9.500 3.300l5.300 5.400M14.800 3.300L9.500 8.700" />
      </svg>
      <svg viewBox="0 0 16.500 13.500" className="-mt-[3px] ml-[22px] h-[36px] w-[44px]">
        <rect x=".7" y="3.200" width="13.300" height="9.500" rx="2" fill="none" stroke="#fff" strokeWidth="1.100" />
        <rect x="2.300" y="4.700" width="10.200" height="6.500" rx=".8" fill="#fff" /><path d="M14.800 6h1q.6 0 .6.600v2.800q0 .6-.6.600h-1z" fill="#fff" />
        <path d="M3.600 0L.3 5.500H2.300L1.500 9.800 5.500 4H3.300L4 .1z" fill="#fff" stroke="#1b242c" strokeWidth=".7" />
      </svg>
      <div className="ml-[42px] w-[150px] pb-[4px] text-right text-[32px] leading-[43px] tracking-[-0.006em] whitespace-nowrap">
        <div>下午 05:34</div>
        <div>2024/12/3</div>
      </div>
      <svg viewBox="0 0 13 15.500" className="ml-[26px] h-[41px] w-[35px]" fill="#9aeaff">
        <path d="M6.500 0C3.500 0 1.600 2.200 1.600 5V8.800L0 11.700V12.300H13V11.700L11.400 8.800V5C11.400 2.200 9.500 0 6.500 0zM4 13.200H9A2.500 2.300 0 0 1 4 13.200z" />
      </svg>
    </div>
  );
}

function Taskbar() {
  return (
    <div className="grid h-[128px] grid-cols-[1365px_1fr_auto] items-center bg-[#1b242c] pr-[57px]">
      <div className="pl-[53px]"><Weather /></div>
      <TaskIcons />
      <Tray />
    </div>
  );
}

export default function App() {
  return (
    <div className="flex h-[2304px] w-[4096px] flex-col overflow-hidden bg-[#84abe9] font-['Noto_Sans','Noto_Sans_CJK_TC',sans-serif] [--spacing:10.667px]">
      <TabStrip />
      <Toolbar />
      <BookmarksBar />
      <Page />
      <Taskbar />
    </div>
  );
}
